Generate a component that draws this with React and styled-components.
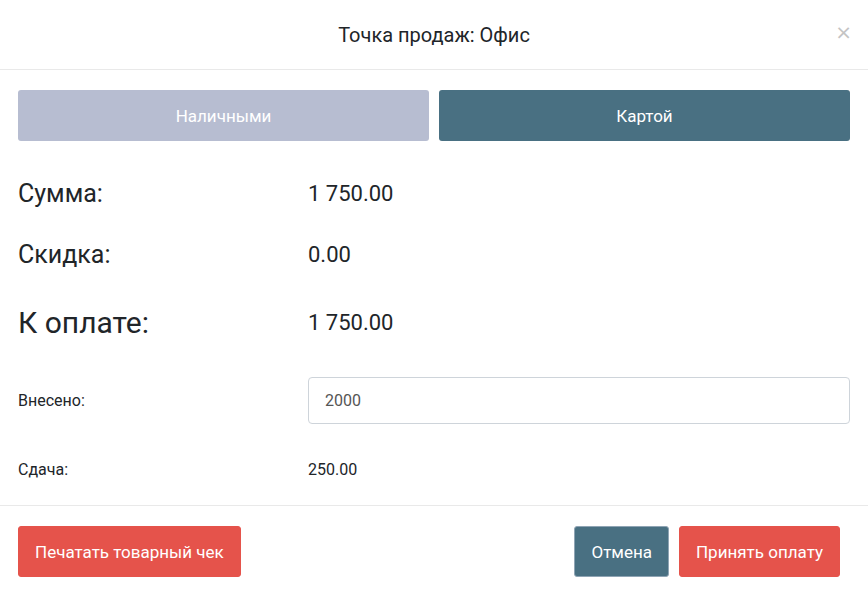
import React, { useState } from "react";
import styled, { createGlobalStyle } from "styled-components";

const GlobalStyle = createGlobalStyle`
  body {
    margin: 0;
    background: #fff;
    font-family: Roboto, "Liberation Sans", sans-serif;
  }
`;

const Modal = styled.div`
  width: 868px;
  height: 590px;
  background: #fff;
  display: flex;
  flex-direction: column;
`;

const Header = styled.div`
  height: 69px;
  border-bottom: 1px solid #e9e9e9;
  display: flex;
  align-items: center;
  justify-content: center;
  position: relative;
`;

const Title = styled.h4`
  margin: 0;
  font-size: 20px;
  font-weight: 400;
  color: #212529;
`;

const Close = styled.button`
  position: absolute;
  right: 16px;
  top: 22px;
  border: none;
  background: none;
  color: #c4c4c4;
  font-size: 20px;
  line-height: 1;
  padding: 0;
  cursor: pointer;
  font-family: "DejaVu Sans", sans-serif;
`;

const Body = styled.div`
  padding: 20px 18px 6px;
`;

const Tabs = styled.div`
  display: grid;
  grid-template-columns: 1fr 1fr;
  gap: 10px;
  margin-bottom: 20px;
`;

const Tab = styled.button`
  height: 51px;
  border: none;
  border-radius: 3px;
  background: ${(p) => (p.$active ? "#497082" : "#b7bdd1")};
  color: #fff;
  font-family: Roboto, "Liberation Sans", sans-serif;
  font-size: 17px;
  cursor: pointer;
`;

const Row = styled.div`
  display: grid;
  grid-template-columns: 290px 1fr;
  align-items: center;
  height: ${(p) => p.$h}px;
`;

const Label = styled.div`
  font-size: ${(p) => p.$size}px;
  color: #212529;
`;

const Value = styled.div`
  font-size: ${(p) => p.$size}px;
  color: #212529;
`;

const Input = styled.input`
  height: 47px;
  box-sizing: border-box;
  border: 1px solid #ced4da;
  border-radius: 4px;
  padding: 0 16px;
  font-family: Roboto, "Liberation Sans", sans-serif;
  font-size: 16px;
  color: #555;
  outline: none;
`;

const Footer = styled.div`
  border-top: 1px solid #e9e9e9;
  padding: 20px 28px 0 18px;
  display: flex;
  align-items: center;
`;

const Actions = styled.div`
  margin-left: auto;
  display: flex;
  gap: 10px;
`;

const Button = styled.button`
  height: 51px;
  padding: 0 16px;
  border-radius: 3px;
  border: 1px solid ${(p) => (p.$variant === "dark" ? "#8fa4b4" : "#e5534b")};
  background: ${(p) => (p.$variant === "dark" ? "#497082" : "#e5534b")};
  color: #fff;
  font-family: Roboto, "Liberation Sans", sans-serif;
  font-size: 17px;
  cursor: pointer;
`;

const App = () => {
  const [mode, setMode] = useState("card");
  const [paid, setPaid] = useState("2000");

  return (
    <Modal>
      <GlobalStyle />
      <Header>
        <Title>Точка продаж: Офис</Title>
        <Close>×</Close>
      </Header>
      <Body>
        <Tabs>
          <Tab $active={mode === "cash"} onClick={() => setMode("cash")}>
            Наличными
          </Tab>
          <Tab $active={mode === "card"} onClick={() => setMode("card")}>
            Картой
          </Tab>
        </Tabs>
        <Row $h={64}>
          <Label $size={25}>Сумма:</Label>
          <Value $size={22}>1 750.00</Value>
        </Row>
        <Row $h={58}>
          <Label $size={25}>Скидка:</Label>
          <Value $size={22}>0.00</Value>
        </Row>
        <Row $h={78}>
          <Label $size={30}>К оплате:</Label>
          <Value $size={22}>1 750.00</Value>
        </Row>
        <Row $h={78}>
          <Label $size={16}>Внесено:</Label>
          <Input value={paid} onChange={(e) => setPaid(e.target.value)} />
        </Row>
        <Row $h={60}>
          <Label $size={16}>Сдача:</Label>
          <Value $size={16}>250.00</Value>
        </Row>
      </Body>
      <Footer>
        <Button>Печатать товарный чек</Button>
        <Actions>
          <Button $variant="dark">Отмена</Button>
          <Button>Принять оплату</Button>
        </Actions>
      </Footer>
    </Modal>
  );
};

export default App;
